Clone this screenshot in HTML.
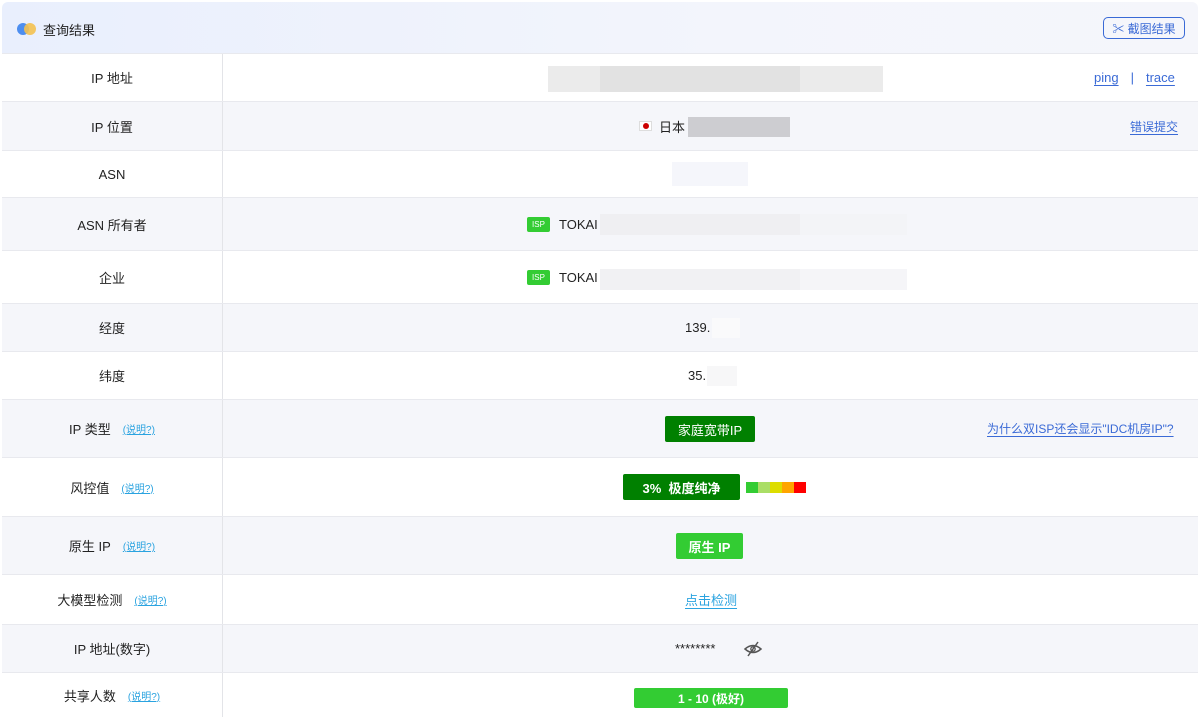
<!DOCTYPE html>
<html><head><meta charset="utf-8"><style>
*{margin:0;padding:0;box-sizing:border-box}
body{width:1200px;height:717px;overflow:hidden;background:#fff;font-family:"Liberation Sans","Noto Sans CJK SC",sans-serif;font-size:13px;color:#222;position:relative}
.hdr{position:absolute;left:2px;top:2px;width:1196px;height:51px;background:linear-gradient(90deg,#e9effd,#f3f5fc 60%,#f5f6fb);border-radius:6px 6px 0 0}
.row{position:absolute;left:2px;width:1196px;border-top:1px solid #e8e9ee}
.row.g{background:#f5f6fa}
.lab{position:absolute;left:0;top:0;bottom:0;width:221px;border-right:1px solid #e3e4e8;display:flex;align-items:center;justify-content:center}
.c{position:absolute;top:0;bottom:0;display:flex;align-items:center}
a{color:#3a6ad6;text-decoration:underline;text-underline-offset:3px}
.q{font-size:10px;color:#2aa3e0;margin-left:12px;text-decoration:underline}
.blk{position:absolute}
.isp{display:inline-block;background:#3c3;color:#fff;font-size:8px;width:23px;height:15px;line-height:15px;text-align:center;border-radius:2px;margin-right:9px}
.btn{color:#fff;display:flex;align-items:center;justify-content:center;border-radius:2px}
</style></head><body>
<div class="hdr">
 <div style="position:absolute;left:15px;top:21px;width:12px;height:12px;border-radius:50%;background:#4d8ef0"></div>
 <div style="position:absolute;left:22px;top:21px;width:12px;height:12px;border-radius:50%;background:#f4c150;opacity:.9"></div>
 <div style="position:absolute;left:41px;top:18px;font-size:13px">查询结果</div>
 <div style="position:absolute;left:1101px;top:15px;width:82px;height:22px;border:1px solid #3a6ad6;border-radius:5px;color:#3a6ad6;font-size:12px;display:flex;align-items:center;justify-content:center">✂ 截图结果</div>
</div>

<div class="row" style="top:53px;height:48px"><div class="lab">IP 地址</div>
 <div class="blk" style="left:546px;top:12px;width:335px;height:26px;background:#ebebeb"><div style="margin-left:52px;width:200px;height:26px;background:#e2e2e2"></div></div>
 <div class="c" style="left:1092px"><a>ping</a><span style="margin:0 12px;color:#3a6ad6">|</span><a>trace</a></div></div>

<div class="row g" style="top:101px;height:49px"><div class="lab">IP 位置</div>
 <div class="c" style="left:637px"><span style="display:inline-block;width:13px;height:10px;background:#fff;border:1px solid #ddd;position:relative;margin-right:7px"><span style="position:absolute;left:3px;top:1px;width:6px;height:6px;border-radius:50%;background:#c00"></span></span>日本</div>
 <div class="blk" style="left:686px;top:15px;width:102px;height:20px;background:#cdcdd1"></div>
 <div class="c" style="left:1128px;font-size:12px"><a>错误提交</a></div></div>

<div class="row" style="top:150px;height:47px"><div class="lab">ASN</div>
 <div class="blk" style="left:670px;top:11px;width:76px;height:24px;background:#f5f6fb"></div></div>

<div class="row g" style="top:197px;height:53px"><div class="lab">ASN 所有者</div>
 <div class="c" style="left:525px"><span class="isp">ISP</span>TOKAI</div>
 <div class="blk" style="left:598px;top:16px;width:307px;height:21px;background:#f3f4f7"><div style="width:200px;height:21px;background:#efeff2"></div></div></div>

<div class="row" style="top:250px;height:53px"><div class="lab">企业</div>
 <div class="c" style="left:525px"><span class="isp">ISP</span>TOKAI</div>
 <div class="blk" style="left:598px;top:18px;width:307px;height:21px;background:#f5f5f8"><div style="width:200px;height:21px;background:#f1f1f3"></div></div></div>

<div class="row g" style="top:303px;height:48px"><div class="lab">经度</div>
 <div class="c" style="left:683px">139.</div><div class="blk" style="left:710px;top:14px;width:28px;height:20px;background:#fafafb"></div></div>

<div class="row" style="top:351px;height:48px"><div class="lab">纬度</div>
 <div class="c" style="left:686px">35.</div><div class="blk" style="left:705px;top:14px;width:30px;height:20px;background:#f7f7f8"></div></div>

<div class="row g" style="top:399px;height:58px"><div class="lab">IP 类型<span class="q">(说明?)</span></div>
 <div class="btn blk" style="left:663px;top:16px;width:90px;height:26px;background:#008000;font-size:13px">家庭宽带IP</div>
 <div class="c" style="left:985px;font-size:12px"><a>为什么双ISP还会显示"IDC机房IP"?</a></div></div>

<div class="row" style="top:457px;height:59px"><div class="lab">风控值<span class="q">(说明?)</span></div>
 <div class="btn blk" style="left:621px;top:16px;width:117px;height:26px;background:#008000;font-weight:bold">3%&nbsp;&nbsp;极度纯净</div>
 <div class="blk" style="left:744px;top:24px;height:11px;width:60px;display:flex"><i style="flex:1;background:#33cc33"></i><i style="flex:1;background:#aade66"></i><i style="flex:1;background:#dddd00"></i><i style="flex:1;background:#ffa500"></i><i style="flex:1;background:#ff0000"></i></div></div>

<div class="row g" style="top:516px;height:58px"><div class="lab">原生 IP<span class="q">(说明?)</span></div>
 <div class="btn blk" style="left:674px;top:16px;width:67px;height:26px;background:#33cc33;font-weight:bold">原生 IP</div></div>

<div class="row" style="top:574px;height:50px"><div class="lab">大模型检测<span class="q">(说明?)</span></div>
 <div class="c" style="left:683px"><a style="color:#2aa3e0">点击检测</a></div></div>

<div class="row g" style="top:624px;height:48px"><div class="lab">IP 地址(数字)</div>
 <div class="c" style="left:673px">********</div>
 <svg class="blk" style="left:741px;top:16px" width="20" height="16" viewBox="0 0 20 16"><path d="M2 8 Q10 1 18 8 Q10 15 2 8Z" fill="none" stroke="#555" stroke-width="1.5"/><circle cx="10" cy="8" r="2.2" fill="none" stroke="#555" stroke-width="1.3"/><line x1="15" y1="1" x2="5" y2="15" stroke="#555" stroke-width="1.5"/></svg></div>

<div class="row" style="top:672px;height:45px"><div class="lab">共享人数<span class="q">(说明?)</span></div>
 <div class="btn blk" style="left:632px;top:15px;width:154px;height:20px;background:#33cc33;font-weight:bold;font-size:12px">1 - 10 (极好)</div></div>
</body></html>
